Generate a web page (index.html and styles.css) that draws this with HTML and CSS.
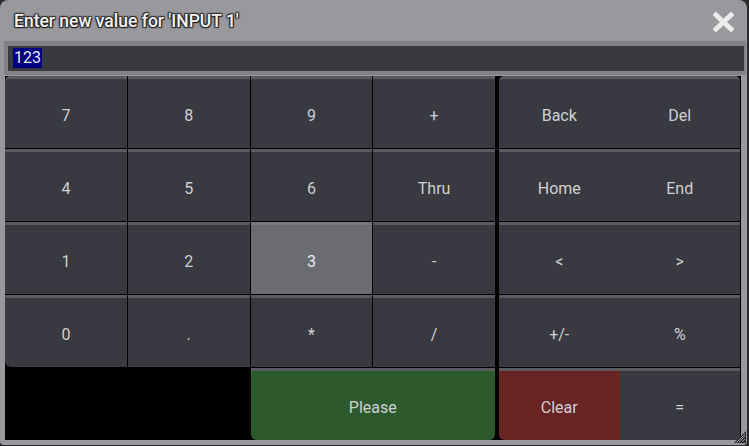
FILE: index.html
```html
<!DOCTYPE html>
<html>
<head>
<meta charset="utf-8">
<link rel="stylesheet" href="styles.css">
</head>
<body>
<div class="window">
  <div class="titlebar">
    <span class="title">Enter new value for 'INPUT 1'</span>
    <svg class="close" width="21" height="20" viewBox="0 0 21 20">
      <path d="M3 3 L18 17 M18 3 L3 17" stroke="#ececec" stroke-width="5" stroke-linecap="square" fill="none"/>
    </svg>
  </div>
  <div class="input"><span class="sel">123</span></div>
  <div class="keypad">
    <div class="pad-left">
      <div class="key r-tl">7</div><div class="key">8</div><div class="key">9</div><div class="key">+</div>
      <div class="key">4</div><div class="key">5</div><div class="key">6</div><div class="key">Thru</div>
      <div class="key">1</div><div class="key">2</div><div class="key active">3</div><div class="key">-</div>
      <div class="key r-bl">0</div><div class="key">.</div><div class="key">*</div><div class="key">/</div>
      <div class="empty"></div><div class="empty"></div><div class="key please">Please</div>
    </div>
    <div class="pad-right">
      <div class="key r-tl">Back</div><div class="key r-tr">Del</div>
      <div class="key">Home</div><div class="key">End</div>
      <div class="key">&lt;</div><div class="key">&gt;</div>
      <div class="key">+/-</div><div class="key">%</div>
      <div class="key clear">Clear</div><div class="key">=</div>
    </div>
  </div>
  <svg class="grip" width="12" height="12" viewBox="0 0 12 12">
    <path d="M12 0 L12 12 L0 12 Z" fill="#2a2a2e"/>
    <path d="M5 11 L11 5 M8 11 L11 8 M2.5 11.5 L11.5 2.5" stroke="#9a9a9e" stroke-width="1"/>
  </svg>
</div>
</body>
</html>
```

FILE: styles.css
```css
html, body {
  margin: 0;
  padding: 0;
  background: #2b2b2e;
}

body {
  width: 749px;
  height: 446px;
  overflow: hidden;
  font-family: Roboto, "Liberation Sans", sans-serif;
}

.window {
  position: relative;
  box-sizing: border-box;
  width: 747px;
  height: 445px;
  background: #99999d;
  border-radius: 8px 8px 4px 4px;
  padding: 0 6px 5px 5px;
  display: flex;
  flex-direction: column;
}

.titlebar {
  height: 41px;
  display: flex;
  align-items: center;
  justify-content: space-between;
  padding: 0 7px 0 9px;
  flex: none;
}

.title {
  font-size: 17.5px;
  font-weight: 500;
  color: #f4f4f4;
  text-shadow: 0 0 2px #1a1a1a, 1px 1px 1px #222, -1px -1px 1px #333, 1px -1px 1px #333, -1px 1px 1px #333;
}

.close {
  display: block;
  margin-top: 2px;
}

.input {
  flex: none;
  box-sizing: border-box;
  height: 34px;
  margin: 0 -5px 1px -1px;
  background: #393940;
  border-style: solid;
  border-color: #828286;
  border-width: 5px 2px 4px 4px;
  padding: 2px 0 0 5px;
  display: flex;
  align-items: flex-start;
}

.sel {
  background: #000080;
  color: #e8e8f0;
  font-size: 16px;
  line-height: 20px;
  padding: 0 1px;
}

.keypad {
  flex: none;
  display: flex;
  gap: 4px;
  background: #000;
  height: 364px;
  padding-right: 1px;
}

.pad-left {
  width: 490px;
  display: grid;
  grid-template-columns: repeat(4, 1fr);
  grid-template-rows: repeat(5, 72px);
  gap: 1px;
}

.pad-right {
  width: 241px;
  display: grid;
  grid-template-columns: repeat(2, 1fr);
  grid-template-rows: repeat(5, 72px);
  row-gap: 1px;
  column-gap: 0;
}

.key {
  box-sizing: border-box;
  background: #393941;
  border-top: 3px solid #5a5a60;
  color: #d0d0d2;
  font-size: 16px;
  padding-top: 4px;
  display: flex;
  align-items: center;
  justify-content: center;
}

.empty {
  background: #000;
}

.active {
  background: #6b6b72;
  border-top-color: #78787e;
  color: #ececec;
}

.please {
  grid-column: span 2;
  background: #2d5a2d;
  border-radius: 0 0 6px 6px;
}

.clear {
  background: #6a2424;
  border-radius: 0 0 0 6px;
}

.r-tl {
  border-top-left-radius: 5px;
}

.r-tr {
  border-top-right-radius: 5px;
}

.r-bl {
  border-bottom-left-radius: 6px;
}

.grip {
  position: absolute;
  right: 1px;
  bottom: 2px;
}
```
